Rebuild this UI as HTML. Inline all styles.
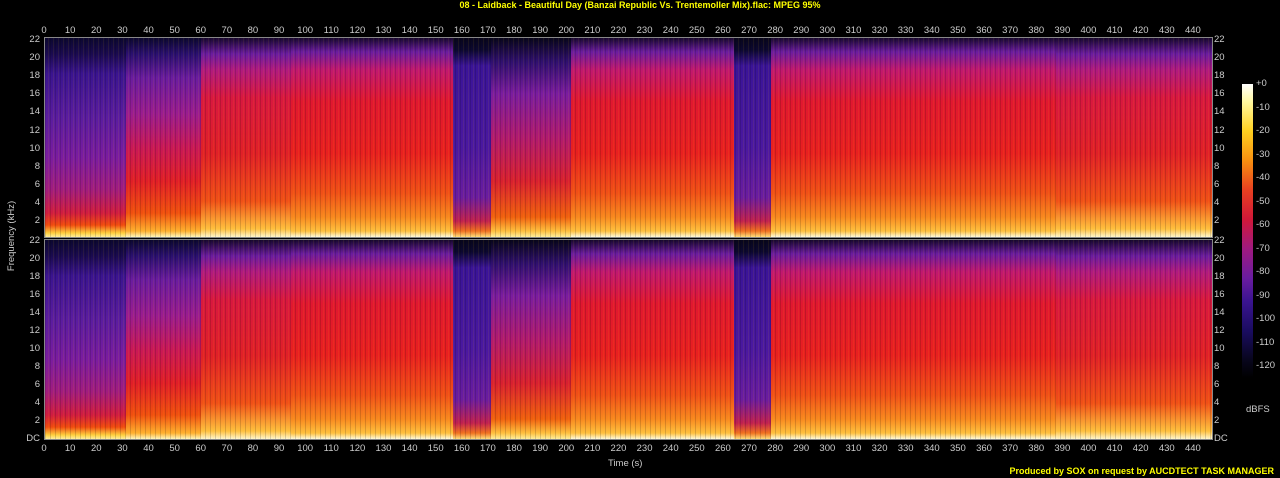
<!DOCTYPE html>
<html><head><meta charset="utf-8"><style>
*{margin:0;padding:0;box-sizing:border-box}
body{width:1280px;height:478px;background:#000;position:relative;overflow:hidden;font-family:"Liberation Sans",sans-serif;color:#ccc;font-size:9.5px}
.t{position:absolute;top:0;left:0;width:1280px;text-align:center;color:#ff0;font-weight:bold;font-size:9px;line-height:10px}
.ch{position:absolute;left:44px;width:1169px;height:201px;overflow:hidden;border:1px solid #888}
.s{position:absolute;top:0;height:100%}
.st{position:absolute;inset:0;background:repeating-linear-gradient(90deg,rgba(0,0,0,.15) 0 1px,transparent 1px 3px,rgba(255,200,0,.08) 3px 4px,transparent 4px 5px)}
.A{background:linear-gradient(#0c0830 0%,#1a0a50 8%,#3a1490 18%,#5a1ca0 40%,#7a1ca0 60%,#a01c80 76%,#d01c40 88%,#f04a10 94%,#ffd040 98%,#fff0a0 100%)}
.B{background:linear-gradient(#0c0830 0%,#2a1070 8%,#6a1ca0 20%,#9a1c90 38%,#c81858 55%,#e01e28 72%,#f05010 88%,#ffb030 97%,#fff8c0 100%)}
.C{background:linear-gradient(#180830 0%,#6a1ca0 7%,#c01870 16%,#e01830 32%,#e82020 58%,#f05018 78%,#f88820 90%,#ffc040 97%,#fffce0 100%)}
.D{background:linear-gradient(#08061c 0%,#0c0830 6%,#3a1498 14%,#4a18a0 55%,#6a1ca0 80%,#c02050 92%,#f07020 97%,#ffe080 100%)}
.E{background:linear-gradient(#08061c 0%,#301070 12%,#7a1ca0 28%,#b01a70 50%,#d82030 72%,#f06010 90%,#ffc040 97%,#fff0a0 100%)}
.F{background:linear-gradient(#180830 0%,#6a1ca0 8%,#b01a80 16%,#d81840 30%,#e02028 58%,#f05018 82%,#ffc040 96%,#fff8d0 100%)}
.xa{position:absolute;left:31px;display:flex;line-height:10px}
.xa span{width:26.12px;text-align:center;flex:none}
.ya{position:absolute;display:flex;flex-direction:column;line-height:10px}
.ya span{display:flex;align-items:center;flex:none}
.yl span{justify-content:flex-end;width:30px;padding-right:2px}
.yr span{justify-content:flex-start;width:30px;padding-left:4px}
.cb{position:absolute;left:1242px;top:84px;width:11px;height:294px;background:linear-gradient(#fff 0%,#fff8a0 6%,#ffd020 16%,#f89010 26%,#e84020 36%,#d01838 46%,#a01a80 56%,#6a1ca0 66%,#3a1490 74%,#1a0c60 84%,#08061c 94%,#000 100%)}
.cl{position:absolute;left:1256px;line-height:10px}
</style></head><body>
<div class="t">08 - Laidback - Beautiful Day (Banzai Republic Vs. Trentemoller Mix).flac: MPEG 95%</div>

<div class="xa" style="top:26px"><span>0</span><span>10</span><span>20</span><span>30</span><span>40</span><span>50</span><span>60</span><span>70</span><span>80</span><span>90</span><span>100</span><span>110</span><span>120</span><span>130</span><span>140</span><span>150</span><span>160</span><span>170</span><span>180</span><span>190</span><span>200</span><span>210</span><span>220</span><span>230</span><span>240</span><span>250</span><span>260</span><span>270</span><span>280</span><span>290</span><span>300</span><span>310</span><span>320</span><span>330</span><span>340</span><span>350</span><span>360</span><span>370</span><span>380</span><span>390</span><span>400</span><span>410</span><span>420</span><span>430</span><span>440</span></div>
<div class="xa" style="top:444px"><span>0</span><span>10</span><span>20</span><span>30</span><span>40</span><span>50</span><span>60</span><span>70</span><span>80</span><span>90</span><span>100</span><span>110</span><span>120</span><span>130</span><span>140</span><span>150</span><span>160</span><span>170</span><span>180</span><span>190</span><span>200</span><span>210</span><span>220</span><span>230</span><span>240</span><span>250</span><span>260</span><span>270</span><span>280</span><span>290</span><span>300</span><span>310</span><span>320</span><span>330</span><span>340</span><span>350</span><span>360</span><span>370</span><span>380</span><span>390</span><span>400</span><span>410</span><span>420</span><span>430</span><span>440</span></div>

<div class="ya yl" style="left:12px;top:31px"><span style="height:18.1px">22</span><span style="height:18.1px">20</span><span style="height:18.1px">18</span><span style="height:18.1px">16</span><span style="height:18.1px">14</span><span style="height:18.1px">12</span><span style="height:18.1px">10</span><span style="height:18.1px">8</span><span style="height:18.1px">6</span><span style="height:18.1px">4</span><span style="height:18.1px">2</span></div>
<div class="ya yl" style="left:12px;top:232px"><span style="height:18px">22</span><span style="height:18px">20</span><span style="height:18px">18</span><span style="height:18px">16</span><span style="height:18px">14</span><span style="height:18px">12</span><span style="height:18px">10</span><span style="height:18px">8</span><span style="height:18px">6</span><span style="height:18px">4</span><span style="height:18px">2</span><span style="height:18px">DC</span></div>
<div class="ya yr" style="left:1210px;top:31px"><span style="height:18.1px">22</span><span style="height:18.1px">20</span><span style="height:18.1px">18</span><span style="height:18.1px">16</span><span style="height:18.1px">14</span><span style="height:18.1px">12</span><span style="height:18.1px">10</span><span style="height:18.1px">8</span><span style="height:18.1px">6</span><span style="height:18.1px">4</span><span style="height:18.1px">2</span></div>
<div class="ya yr" style="left:1210px;top:232px"><span style="height:18px">22</span><span style="height:18px">20</span><span style="height:18px">18</span><span style="height:18px">16</span><span style="height:18px">14</span><span style="height:18px">12</span><span style="height:18px">10</span><span style="height:18px">8</span><span style="height:18px">6</span><span style="height:18px">4</span><span style="height:18px">2</span><span style="height:18px">DC</span></div>

<div style="position:absolute;left:7px;top:276px;transform:rotate(-90deg);transform-origin:0 0;width:80px;text-align:center;line-height:10px">Frequency (kHz)</div>

<div class="ch" style="top:37px">
<div class="s A" style="left:0;width:81px"></div>
<div class="s B" style="left:81px;width:75px"></div>
<div class="s F" style="left:156px;width:90px"></div>
<div class="s C" style="left:246px;width:162px"></div>
<div class="s D" style="left:408px;width:38px"></div>
<div class="s E" style="left:446px;width:80px"></div>
<div class="s C" style="left:526px;width:163px"></div>
<div class="s D" style="left:689px;width:37px"></div>
<div class="s C" style="left:726px;width:120px"></div>
<div class="s C" style="left:846px;width:165px"></div>
<div class="s F" style="left:1011px;width:158px"></div>
<div class="st"></div>
</div>
<div class="ch" style="top:239px">
<div class="s A" style="left:0;width:81px"></div>
<div class="s B" style="left:81px;width:75px"></div>
<div class="s F" style="left:156px;width:90px"></div>
<div class="s C" style="left:246px;width:162px"></div>
<div class="s D" style="left:408px;width:38px"></div>
<div class="s E" style="left:446px;width:80px"></div>
<div class="s C" style="left:526px;width:163px"></div>
<div class="s D" style="left:689px;width:37px"></div>
<div class="s C" style="left:726px;width:120px"></div>
<div class="s C" style="left:846px;width:165px"></div>
<div class="s F" style="left:1011px;width:158px"></div>
<div class="st"></div>
</div>

<div style="position:absolute;left:608px;top:458px">Time (s)</div>

<div class="cb"></div>
<div class="cl" style="top:79px">+0</div>
<div class="cl" style="top:103px">-10</div>
<div class="cl" style="top:126px">-20</div>
<div class="cl" style="top:150px">-30</div>
<div class="cl" style="top:173px">-40</div>
<div class="cl" style="top:197px">-50</div>
<div class="cl" style="top:220px">-60</div>
<div class="cl" style="top:244px">-70</div>
<div class="cl" style="top:267px">-80</div>
<div class="cl" style="top:291px">-90</div>
<div class="cl" style="top:314px">-100</div>
<div class="cl" style="top:338px">-110</div>
<div class="cl" style="top:361px">-120</div>
<div class="cl" style="top:405px;left:1246px">dBFS</div>

<div style="position:absolute;right:6px;top:466px;color:#ff0;font-weight:bold;font-size:9px">Produced by SOX on request by AUCDTECT TASK MANAGER</div>
</body></html>
